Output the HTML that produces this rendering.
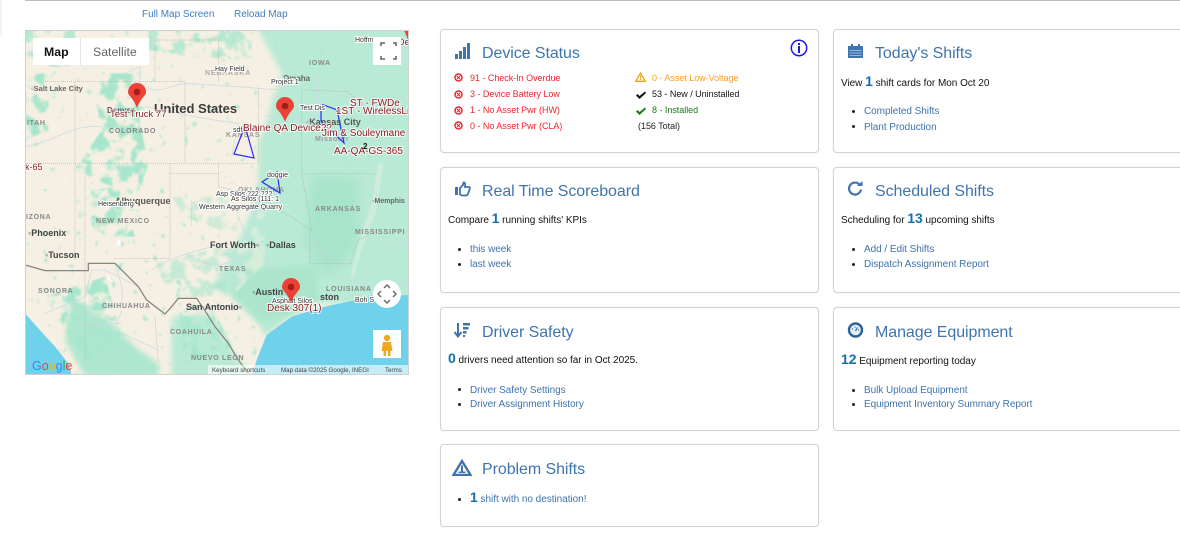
<!DOCTYPE html>
<html><head><meta charset="utf-8"><style>
html,body{margin:0;padding:0;background:#fff;width:1180px;height:555px;overflow:hidden;font-family:"Liberation Sans",sans-serif}
.abs{position:absolute}
.wrap{position:absolute;left:0;top:0;width:1180px;height:555px;overflow:hidden;filter:blur(.3px)}
.top{position:absolute;top:9px;font-size:10px;line-height:12px;color:#3f7fc4;white-space:nowrap;letter-spacing:-.03px}
.card{position:absolute;background:#fff;border:1px solid #d4d4d4;border-radius:4px;box-sizing:border-box;box-shadow:0 0 1px #ddd}
.t{position:absolute;font-size:16px;line-height:20px;color:#3f74ae;white-space:nowrap;letter-spacing:-.07px}
.ic{position:absolute}
.p{position:absolute;font-size:10px;line-height:14px;color:#111;white-space:nowrap;letter-spacing:-.03px}
.p b{font-size:14px;color:#1270ac;font-weight:bold;line-height:14px}
.l{position:absolute;font-size:10px;line-height:12px;color:#3f74ae;white-space:nowrap;letter-spacing:-.05px}
.d{position:absolute;width:3px;height:3px;border-radius:50%;background:#222}
.s{position:absolute;font-size:9px;line-height:11px;white-space:nowrap;letter-spacing:-.03px}
.r{color:#f0222a}
svg text{font-family:"Liberation Sans",sans-serif}
</style></head><body><div class="wrap">
<div class="abs" style="left:25px;top:0;width:1155px;height:1px;background:#bbb"></div>
<div class="abs" style="left:0;top:0;width:2px;height:36px;background:#f3f3f3"></div>
<div class="top" style="left:142px">Full Map Screen</div>
<div class="top" style="left:234px">Reload Map</div>

<svg class="abs" style="left:25px;top:30px;outline:1px solid #d0d0d0;outline-offset:-1px" width="384" height="345" viewBox="25 30 384 345">
<defs>
<filter id="n" filterUnits="userSpaceOnUse" x="0" y="0" width="1152" height="1035" color-interpolation-filters="sRGB">
<feTurbulence type="fractalNoise" baseFrequency=".025" numOctaves="3" seed="4" result="t"/>
<feColorMatrix in="t" type="matrix" values="0 0 0 0 0 0 0 0 0 0 0 0 0 0 0 7 0 0 0 -3.2" result="m"/>
<feComposite in="SourceGraphic" in2="m" operator="in"/>
<feGaussianBlur stdDeviation="2"/>
</filter>
<filter id="sp" filterUnits="userSpaceOnUse" x="0" y="0" width="1152" height="1035" color-interpolation-filters="sRGB">
<feTurbulence type="fractalNoise" baseFrequency=".04" numOctaves="2" seed="9" result="t"/>
<feColorMatrix in="t" type="matrix" values="0 0 0 0 0 0 0 0 0 0 0 0 0 0 0 9 0 0 0 -6.200" result="m"/>
<feComposite in="SourceGraphic" in2="m" operator="in"/>
<feGaussianBlur stdDeviation="1.500"/>
</filter>
<filter id="b" x="-10%" y="-10%" width="120%" height="120%"><feGaussianBlur stdDeviation="8"/></filter>
<filter id="b2" x="-20%" y="-20%" width="140%" height="140%"><feGaussianBlur stdDeviation="14"/></filter>
</defs>
<rect x="25" y="30" width="384" height="345" fill="#f5f0e3"/>
<g transform="translate(25 30) scale(.33333)">
<rect width="1152" height="1035" fill="#b6e9d3" filter="url(#sp)"/>
<g filter="url(#b)">
<path d="M690 -20H1170V820H880L800 860 720 920 700 880 620 800 560 770 610 700 650 610 680 540 700 450 700 340 730 260 750 180 770 130Z" fill="#b9ead6"/>
<path d="M640 720L880 700 880 820 780 860 700 880 620 800Z" fill="#abe6cc"/>
<path d="M440 860L560 850 640 990 700 1040H440Z" fill="#b9ead6"/>
<path d="M140 800L260 880 330 950 400 1000 400 1040H180L120 930Z" fill="#aee7cf"/>
</g>
<path d="M860 440L1000 440 1000 630 960 700 900 740 840 640Z" fill="#a8e4ca" filter="url(#b2)"/>
<path d="M975 740L1000 640 1040 520 1060 400 1075 400 1055 540 1010 660 985 745Z" fill="#e6efdf" opacity=".45"/>
<path d="M640 640L720 520 720 700 630 790ZM600 100L770 100 760 190 600 190Z" fill="#f5f0e3" filter="url(#n)" opacity=".5"/>
<g filter="url(#n)" fill="#a7e6cc">
<path d="M220 130L335 130 345 280 370 400 340 500 260 470 150 420 230 300 210 200Z"/>
<path d="M0 130L70 130 70 300 0 330Z"/>
<path d="M0 0H150V110H60L0 90Z" opacity=".8"/>
<path d="M370 0H680V90L500 80 370 60Z" opacity=".8"/>
<path d="M200 480L280 470 330 620 250 620 150 560Z"/>
<path d="M60 800L240 740 290 920 200 1000 120 900Z" />
<path d="M440 500L640 500 640 620 480 560Z" opacity=".5"/>
<path d="M380 700L640 640 600 800 450 800Z" opacity=".6"/>
<path d="M460 820L560 830 620 950 480 1000Z"/>
</g>
<path d="M1152 795L1040 800 900 830 800 860 725 915 695 990 680 1040H1152Z" fill="#70d2ea"/>
<path d="M0 850L40 895 90 950 130 1000 140 1035H0Z" fill="#70d2ea"/>
<g fill="none" stroke="#c8d8e4" stroke-width="2.500" opacity=".85">
<path d="M345 160V110L300 130M345 160C400 200 420 170 480 160L640 170 760 180M360 230C430 240 480 260 640 280M720 260C760 250 820 270 850 270M0 350C80 340 140 280 230 290M640 280L620 380M500 510V590M640 560C660 620 690 640 700 640M700 640C720 700 780 740 790 790M480 670C560 720 600 720 700 640M340 770L240 720 200 720M200 720L180 800 60 850M290 820C300 760 270 720 270 700M290 840L270 900 400 960M290 880L150 880M500 830L640 830M740 0C760 60 770 120 780 180M900 0C880 80 880 170 880 270M880 270C920 360 960 400 1060 500M1050 650L1152 640M880 720C920 740 1000 770 1152 770M840 620L960 720M600 640C520 660 440 680 380 720"/>
</g>
<g fill="none" stroke="#b5b0a6" stroke-width="2" stroke-dasharray="3 3">
<path d="M390 30H580V155M390 30V155M60 155H480V400M150 155V690M0 400H690M435 400V685H265M435 430H580V400M580 430V470L700 500 860 600M835 430H1050M855 600V700H980M975 700L1000 630 1060 600M700 400L700 170M830 430V180L970 185 1050 260M390 860L400 1000M180 440V1000M830 430L860 600"/>
</g>
<path d="M0 705L60 722H190V700H270L340 770 365 810 420 852 440 830 460 805 515 805 545 850 570 890 610 940 640 990 670 1030" fill="none" stroke="#85857f" stroke-width="3.800" stroke-linejoin="round"/>
<path d="M275 635L285 628 288 648 275 645ZM245 730L262 755 250 750Z" fill="#fff" opacity=".9"/>
</g>
<g font-weight="bold" fill="#555">
<text x="31" y="91" font-size="7.500" fill="#666">◦Salt Lake City</text>
<text x="27" y="125" font-size="7" letter-spacing=".7" fill="#888">ITAH</text>
<text x="109" y="133" font-size="7" letter-spacing=".8" fill="#888">COLORADO</text>
<text x="154" y="113" font-size="13" fill="#3c3c3c">United States</text>
<text x="309" y="65" font-size="7" letter-spacing=".8" fill="#888">IOWA</text>
<text x="205" y="75" font-size="7" letter-spacing=".8" fill="#aaa">NEBRASKA</text>
<text x="226" y="137" font-size="7" letter-spacing=".8" fill="#999">KANSAS</text>
<text x="306" y="125" font-size="9" fill="#555">◦Kansas City</text>
<text x="315" y="141" font-size="7" fill="#999" letter-spacing=".6">Missouri</text>
<text x="238" y="192" font-size="7" letter-spacing=".7" fill="#999">OKLAHOMA</text>
<text x="96" y="223" font-size="7" letter-spacing=".8" fill="#888">NEW MEXICO</text>
<text x="115" y="204" font-size="9" fill="#555">Albuquerque</text>
<text x="26" y="219" font-size="7" letter-spacing=".7" fill="#888">IZONA</text>
<text x="28" y="236" font-size="9" fill="#444">◦Phoenix</text>
<text x="45" y="258" font-size="9" fill="#444">◦Tucson</text>
<text x="210" y="248" font-size="9" fill="#444">Fort Worth◦</text>
<text x="266" y="248" font-size="9" fill="#444">◦Dallas</text>
<text x="219" y="271" font-size="7" letter-spacing=".8" fill="#888">TEXAS</text>
<text x="315" y="211" font-size="7" letter-spacing=".8" fill="#888">ARKANSAS</text>
<text x="355" y="234" font-size="7" letter-spacing=".8" fill="#888">MISSISSIPPI</text>
<text x="326" y="291" font-size="7" letter-spacing=".8" fill="#888">LOUISIANA</text>
<text x="372" y="203" font-size="7" fill="#666">◦Memphis</text>
<text x="252" y="295" font-size="9" fill="#444">◦Austin</text>
<text x="186" y="310" font-size="9" fill="#444">San Antonio◦</text>
<text x="38" y="293" font-size="7" letter-spacing=".8" fill="#888">SONORA</text>
<text x="102" y="308" font-size="7" letter-spacing=".7" fill="#888">CHIHUAHUA</text>
<text x="170" y="334" font-size="7" letter-spacing=".7" fill="#888">COAHUILA</text>
<text x="191" y="360" font-size="7" letter-spacing=".7" fill="#888">NUEVO LEON</text>
<text x="320" y="300" font-size="9" fill="#444">ston</text>
<text x="107" y="113" font-size="8" fill="#555">Denver</text>
<text x="283" y="81" font-size="8" fill="#666">Omaha</text>
</g>
<g fill="none" stroke="#2a2cf0" stroke-width="1.200">
<path d="M245 126L234 154 254 158Z"/><path d="M321 104L337 110 344 143 321 121Z"/><path d="M262 182L277 172 280 193Z"/>
</g>
<g font-size="10" fill="#8a1c20" stroke="#fff" stroke-width="2" paint-order="stroke" stroke-opacity=".8">
<text x="110" y="117" font-size="9.500">Test Truck 77</text>
<text x="243" y="131" font-size="10">Blaine QA Device2?</text>
<text x="322" y="136" font-size="10">Jim &amp; Souleymane</text>
<text x="334" y="154" font-size="10">AA-QA-GS-365</text>
<text x="350" y="106" font-size="10">ST - FWDe</text>
<text x="336" y="114" font-size="10">1ST - WirelessLin</text>
<text x="25" y="170" font-size="9">k-65</text>
<text x="267" y="311" font-size="10">Desk 307(1)</text>
<text x="398" y="45" font-size="9">De</text>
</g>
<g font-size="7" fill="#333" stroke="#fff" stroke-width="2" paint-order="stroke">
<text x="215" y="71">Hay Field</text>
<text x="271" y="84">Project 1</text>
<text x="300" y="110">Test Dis</text>
<text x="233" y="132">sdf</text>
<text x="267" y="177">doggie</text>
<text x="216" y="196">Asp Silos 222 222</text>
<text x="231" y="201">As Silos (111: 1</text>
<text x="199" y="209">Western Aggregate Quarry</text>
<text x="98" y="206">Heisenberg</text>
<text x="272" y="303">Asphalt Silos</text>
<text x="355" y="42">Hoffm</text>
<text x="355" y="302">Boh S</text>
</g>
<text x="363" y="149" font-size="8" font-weight="bold" fill="#111">2</text>
<rect x="208" y="365" width="201" height="10" fill="#fff" fill-opacity=".6"/>
<g font-size="6.200" fill="#444"><text x="212" y="372">Keyboard shortcuts</text><text x="281" y="372">Map data ©2025 Google, INEGI</text><text x="385" y="372">Terms</text></g>
<text x="32" y="370" font-size="12.500"><tspan fill="#4285f4">G</tspan><tspan fill="#ea4335">o</tspan><tspan fill="#f5b400">o</tspan><tspan fill="#4285f4">g</tspan><tspan fill="#34a853">l</tspan><tspan fill="#ea4335">e</tspan></text>
<path d="M137 108C133 97 128 96 128 92A9 9 0 1 1 146 92C146 96 141 97 137 108Z" fill="#ea4335"/><circle cx="137" cy="92" r="3.300" fill="#a61b1b"/>
<path d="M285 122C281 111 276 110 276 106A9 9 0 1 1 294 106C294 110 289 111 285 122Z" fill="#ea4335"/><circle cx="285" cy="106" r="3.300" fill="#a61b1b"/>
<path d="M291 303C287 292 282 291 282 287A9 9 0 1 1 300 287C300 291 295 292 291 303Z" fill="#ea4335"/><circle cx="291" cy="287" r="3.300" fill="#a61b1b"/>
<path d="M404 30H409V42Z" fill="#ea4335"/>
<rect x="33" y="38" width="116" height="27" fill="#fff"/>
<line x1="80.500" y1="38" x2="80.500" y2="65" stroke="#e6e6e6"/>
<text x="44" y="56" font-size="12.300" font-weight="bold" fill="#111">Map</text>
<text x="93" y="56" font-size="12.300" fill="#666">Satellite</text>
<rect x="373" y="37" width="28" height="28" fill="#fff"/>
<path d="M381 46V43H385M393 43H396V46M396 56V59H393M385 59H381V56" fill="none" stroke="#666" stroke-width="1.600"/>
<circle cx="387" cy="294" r="14" fill="#fff"/>
<path d="M384 288L387 285 390 288M384 300L387 303 390 300M381 291L378 294 381 297M393 291L396 294 393 297" fill="none" stroke="#666" stroke-width="1.400"/>
<rect x="373" y="330" width="28" height="28" fill="#fff"/>
<circle cx="387" cy="338" r="3.200" fill="#f2a81d"/><path d="M383 342H391L392.500 351H390.500V356H388V351H386V356H383.500V351H381.500Z" fill="#f2a81d"/>
</svg>

<!-- Cards -->
<div class="card" style="left:440px;top:29px;width:379px;height:124px"></div>
<div class="card" style="left:440px;top:167px;width:379px;height:126px"></div>
<div class="card" style="left:440px;top:307px;width:379px;height:124px"></div>
<div class="card" style="left:440px;top:444px;width:379px;height:83px"></div>
<div class="card" style="left:833px;top:29px;width:360px;height:124px"></div>
<div class="card" style="left:833px;top:167px;width:360px;height:126px"></div>
<div class="card" style="left:833px;top:307px;width:360px;height:124px"></div>

<!-- Device Status -->
<svg class="ic" style="left:455px;top:43px" width="16" height="17"><g fill="#3f74ae"><rect x="0" y="11" width="3" height="5"/><rect x="4" y="8" width="3" height="8"/><rect x="8" y="4" width="3" height="12"/><rect x="12" y="0" width="3" height="16"/></g></svg>
<div class="t" style="left:482px;top:44px">Device Status</div>
<svg class="ic" style="left:790px;top:39px" width="18" height="18"><circle cx="9" cy="9" r="7.700" fill="none" stroke="#1a1ae6" stroke-width="1.500"/><rect x="8" y="4" width="2" height="2" fill="#1a1ae6"/><rect x="8" y="7" width="2" height="7" fill="#1a1ae6"/></svg>
<svg width="0" height="0" style="position:absolute"><defs><g id="x"><circle cx="4.500" cy="4.500" r="3.500" fill="none" stroke="#f0222a" stroke-width="1.500"/><path d="M3 3L6 6M6 3L3 6" stroke="#f0222a" stroke-width="1"/></g><path id="ck" d="M0 5.500L1.500 4 3.500 6 9 1.500 10 3 3.500 9Z"/></defs></svg>
<svg class="ic" style="left:454px;top:73px" width="9" height="9"><use href="#x"/></svg>
<svg class="ic" style="left:454px;top:90px" width="9" height="9"><use href="#x"/></svg>
<svg class="ic" style="left:454px;top:106px" width="9" height="9"><use href="#x"/></svg>
<svg class="ic" style="left:454px;top:121px" width="9" height="9"><use href="#x"/></svg>
<div class="s r" style="left:470px;top:73px">91 - Check-In Overdue</div>
<div class="s r" style="left:470px;top:89px">3 - Device Battery Low</div>
<div class="s r" style="left:470px;top:105px">1 - No Asset Pwr (HW)</div>
<div class="s r" style="left:470px;top:121px">0 - No Asset Pwr (CLA)</div>
<svg class="ic" style="left:635px;top:72px" width="11" height="10"><path d="M5.500 1L10.300 9.300H.7Z" fill="none" stroke="#f5a01e" stroke-width="1.300"/><rect x="5" y="3.500" width="1" height="3" fill="#f5a01e"/><rect x="5" y="7" width="1" height="1" fill="#f5a01e"/></svg>
<div class="s" style="left:652px;top:73px;color:#f5a01e">0 - Asset Low-Voltage</div>
<svg class="ic" style="left:636px;top:90px;fill:#111" width="10" height="10"><use href="#ck"/></svg>
<div class="s" style="left:652px;top:89px;color:#111">53 - New / Uninstalled</div>
<svg class="ic" style="left:636px;top:106px;fill:#1a7a1a" width="10" height="10"><use href="#ck"/></svg>
<div class="s" style="left:652px;top:105px;color:#1a7a1a">8 - Installed</div>
<div class="s" style="left:638px;top:121px;color:#222">(156 Total)</div>

<!-- Scoreboard -->
<svg class="ic" style="left:454px;top:181px" width="17" height="17"><rect x="1" y="6" width="3" height="8" fill="#3f74ae"/><path d="M6 7L9 4 9.500 1.500C11 1 11.500 3 11 6H15C16 6 16 7.500 15.500 8.500L14 13C13.500 14 12.500 14.500 11 14.500H8L6 13.500Z" fill="none" stroke="#3f74ae" stroke-width="1.800"/></svg>
<div class="t" style="left:482px;top:182px">Real Time Scoreboard</div>
<div class="p" style="left:448px;top:211px">Compare <b>1</b> running shifts' KPIs</div>
<div class="d" style="left:458px;top:248px"></div><div class="l" style="left:470px;top:244px">this week</div>
<div class="d" style="left:458px;top:263px"></div><div class="l" style="left:470px;top:259px">last week</div>

<!-- Driver Safety -->
<svg class="ic" style="left:453px;top:322px" width="18" height="17"><path d="M5 1V13M1.500 10L5 14.500 8.500 10" fill="none" stroke="#3f74ae" stroke-width="2"/><g fill="#3f74ae"><rect x="10" y="1" width="7" height="2.500"/><rect x="10" y="5" width="5.500" height="2.500"/><rect x="10" y="9" width="3.500" height="2.500"/><rect x="10" y="13" width="2" height="2"/></g></svg>
<div class="t" style="left:482px;top:323px">Driver Safety</div>
<div class="p" style="left:448px;top:351px"><b>0</b> drivers need attention so far in Oct 2025.</div>
<div class="d" style="left:458px;top:388px"></div><div class="l" style="left:470px;top:385px">Driver Safety Settings</div>
<div class="d" style="left:458px;top:403px"></div><div class="l" style="left:470px;top:399px">Driver Assignment History</div>

<!-- Problem Shifts -->
<svg class="ic" style="left:452px;top:459px" width="20" height="17"><path d="M10 2L18.500 16H1.500Z" fill="none" stroke="#3f74ae" stroke-width="2.400"/><rect x="9" y="6.500" width="2" height="6" fill="#3f74ae"/><rect x="6.500" y="12.500" width="7" height="1.500" fill="#3f74ae"/></svg>
<div class="t" style="left:482px;top:460px">Problem Shifts</div>
<div class="d" style="left:458px;top:498px"></div>
<div class="p" style="left:470px;top:490px;color:#3f74ae"><b>1</b> shift with no destination!</div>

<!-- Today's Shifts -->
<svg class="ic" style="left:847px;top:43px" width="17" height="16"><path d="M1 3H16V15H1Z" fill="#3f74ae"/><rect x="4" y="1" width="2" height="3" fill="#3f74ae"/><rect x="11" y="1" width="2" height="3" fill="#3f74ae"/><path d="M2.500 7.500H14.500M2.500 10H14.500M2.500 12.500H14.500" stroke="#b8cde2" stroke-width=".8"/></svg>
<div class="t" style="left:875px;top:44px">Today's Shifts</div>
<div class="p" style="left:841px;top:74px">View <b>1</b> shift cards for Mon Oct 20</div>
<div class="d" style="left:852px;top:110px"></div><div class="l" style="left:864px;top:106px">Completed Shifts</div>
<div class="d" style="left:852px;top:125px"></div><div class="l" style="left:864px;top:122px">Plant Production</div>

<!-- Scheduled Shifts -->
<svg class="ic" style="left:847px;top:180px" width="17" height="17"><path d="M14 9.500A6 6 0 1 1 12.500 4.500" fill="none" stroke="#3f74ae" stroke-width="2.200"/><path d="M10 6H15.500V1Z" fill="#3f74ae"/></svg>
<div class="t" style="left:875px;top:182px">Scheduled Shifts</div>
<div class="p" style="left:841px;top:211px">Scheduling for <b>13</b> upcoming shifts</div>
<div class="d" style="left:852px;top:248px"></div><div class="l" style="left:864px;top:244px">Add / Edit Shifts</div>
<div class="d" style="left:852px;top:263px"></div><div class="l" style="left:864px;top:259px">Dispatch Assignment Report</div>

<!-- Manage Equipment -->
<svg class="ic" style="left:847px;top:322px" width="17" height="16"><circle cx="8.500" cy="8" r="6.500" fill="#e8f0f7" stroke="#2e6396" stroke-width="2.400"/><path d="M8.500 9L10.500 5.500M5 7H6M11 8H12M7.500 5H8.500" stroke="#2e6396" stroke-width="1.200"/></svg>
<div class="t" style="left:875px;top:323px">Manage Equipment</div>
<div class="p" style="left:841px;top:352px"><b>12</b> Equipment reporting today</div>
<div class="d" style="left:852px;top:389px"></div><div class="l" style="left:864px;top:385px">Bulk Upload Equipment</div>
<div class="d" style="left:852px;top:403px"></div><div class="l" style="left:864px;top:399px">Equipment Inventory Summary Report</div>
</div></body></html>
